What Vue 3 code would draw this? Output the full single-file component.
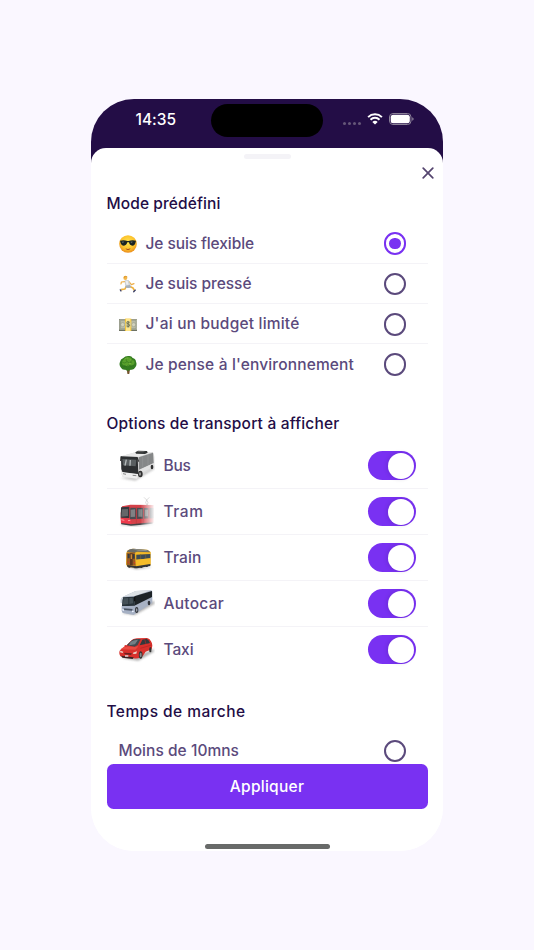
<script setup>
import { ref, reactive } from 'vue';

const mode = ref('flexible');
const walk = ref('');

const modes = [
    { id: 'flexible', label: 'Je suis flexible', width: 107.5 },
    { id: 'presse', label: 'Je suis pressé', width: 105 },
    { id: 'budget', label: "J'ai un budget limité", width: 153 },
    { id: 'nature', label: "Je pense à l'environnement", width: 207.5 }
];

const transports = reactive([
    { id: 'bus', label: 'Bus', width: 26, on: true },
    { id: 'tram', label: 'Tram', width: 39, on: true },
    { id: 'train', label: 'Train', width: 37, on: true },
    { id: 'autocar', label: 'Autocar', width: 59.5, on: true },
    { id: 'taxi', label: 'Taxi', width: 29, on: true }
]);

// spread the letters so that each label takes the width given
const vFit = {
    mounted(el, binding) {
        const range = document.createRange();
        range.selectNodeContents(el);
        const natural = range.getBoundingClientRect().width;
        el.style.letterSpacing = (binding.value + 1 - natural) / el.textContent.length + 'px';
    }
};
</script>

<template>
    <div class="page">
        <div class="phone">
            <header class="status">
                <span v-fit="39.5" class="time">14:35</span>
                <span class="island"></span>
                <div class="signals">
                    <span class="dots"><i></i><i></i><i></i><i></i></span>
                    <svg class="wifi" width="16" height="12" viewBox="0 0 16 12">
                        <path d="M1.1 4.1a10 10 0 0 1 13.8 0M3.5 6.7a6.4 6.4 0 0 1 9 0" fill="none" stroke="#fff" stroke-width="2" />
                        <path d="M5.3 8.9a4 4 0 0 1 5.4 0L8 11.6z" fill="#fff" />
                    </svg>
                    <svg class="battery" width="25" height="12" viewBox="0 0 25 12">
                        <rect x=".5" y=".5" width="21.5" height="11" rx="3.5" fill="none" stroke="#8b8198" />
                        <rect x="1.7" y="1.7" width="19.1" height="8.6" rx="2.5" fill="#fff" />
                        <path d="M23.2 4.2q1.5.5 1.5 1.8t-1.5 1.8z" fill="#8b8198" />
                    </svg>
                </div>
            </header>

            <main class="sheet">
                <div class="grabber"></div>
                <div class="top">
                    <button class="close" aria-label="Fermer">
                        <svg width="12" height="12" viewBox="0 0 12 12">
                            <path d="M1.2 1.2l9.6 9.6M10.8 1.2l-9.6 9.6" stroke="#55456f" stroke-width="1.7" stroke-linecap="round" />
                        </svg>
                    </button>
                </div>

                <div class="content">
                    <section class="modes">
                        <h2><span v-fit="113">Mode prédéfini</span></h2>
                        <ul>
                            <li v-for="item in modes" :key="item.id" @click="mode = item.id">
                                <svg v-if="item.id === 'flexible'" class="emoji" viewBox="57 29 54 54">
                                    <defs>
                                        <radialGradient id="face" cx=".5" cy=".4" r=".6">
                                            <stop offset="0" stop-color="#ffe652" />
                                            <stop offset=".65" stop-color="#fcc22c" />
                                            <stop offset="1" stop-color="#e98b1e" />
                                        </radialGradient>
                                    </defs>
                                    <circle cx="84" cy="56" r="26.5" fill="url(#face)" />
                                    <path d="M60 46q12-3 22 1h4q10-4 22-1l-1 4q-2 11-10 11-8 0-10-10h-5q-3 10-10 10-9 0-11-11z" fill="#1b2423" />
                                    <path d="M65 49q5-1 8 0l-5 5zM91 49q5-1 8 0l-5 5z" fill="#5d6866" />
                                    <path d="M76 69q9 4 16-1-2 6-8 6-5 0-8-5z" fill="#9b431b" />
                                </svg>
                                <svg v-else-if="item.id === 'presse'" class="emoji" viewBox="57 151 54 54">
                                    <path d="M75 171l-11 1-1 6M87 171l7 9 8-3" fill="none" stroke="#efad43" stroke-width="3.5" stroke-linecap="round" stroke-linejoin="round" />
                                    <path d="M79 184l-4 9-12 2M87 184l12 6 4 7" fill="none" stroke="#f0b13a" stroke-width="5" stroke-linejoin="round" />
                                    <path d="M74 167l12-1 6 15-3 8-11-1-3-7z" fill="#ccd1d3" />
                                    <path d="M77 169h6l3 11h-7z" fill="#ededee" />
                                    <path d="M77 183l13-2 4 7-7 2-11-1z" fill="#a7afb8" />
                                    <circle cx="76" cy="160" r="6" fill="#f3b74b" />
                                    <path d="M71 159q0-6 5-6 6 0 7 5l-7-1-2 4z" fill="#e09e35" />
                                    <path d="M60 192l5 6-2 4-4-6zM99 200l7-6 2 3-7 7z" fill="#34385f" />
                                </svg>
                                <svg v-else-if="item.id === 'budget'" class="emoji" viewBox="57 272 54 54">
                                    <path d="M57 281h55v36H57z" fill="#6d7263" />
                                    <path d="M58 282h53v31H58z" fill="#b9bca9" />
                                    <path d="M61 285h47v25H61z" fill="none" stroke="#858a7b" stroke-width="1.5" />
                                    <circle cx="68" cy="298" r="6" fill="#d2d2bd" stroke="#78806e" />
                                    <circle cx="101" cy="298" r="6" fill="#d2d2bd" stroke="#78806e" />
                                    <path d="M75 280h19v37H75z" fill="#f2c33a" />
                                    <path d="M78 280h13v37H78z" fill="#ffe68b" />
                                    <ellipse cx="84.5" cy="297" rx="8" ry="11" fill="#d5cd91" />
                                    <path d="M89 291q-8-4-9 1 0 3 5 4 5 2 4 5-2 4-9 1M84.5 288v18" fill="none" stroke="#4d553f" stroke-width="2" />
                                </svg>
                                <svg v-else class="emoji" viewBox="57 393 54 54">
                                    <path d="M80 430l2 16q3 2 6 0l2-16z" fill="#75542f" />
                                    <path d="M84 393q10-1 14 6 9 2 10 11 4 9-2 17-4 9-14 7-8 6-16 0-9 2-13-6-7-8-3-17 1-9 10-12 5-6 14-6z" fill="#347d20" />
                                    <path d="M70 405q4-9 14-8 10-1 13 7 9 3 6 12-5 8-13 5-8 6-15 0-10-1-9-8 0-6 4-8z" fill="#58a02c" />
                                    <path d="M67 412q8 5 14-2 6 7 15 1M73 424q7 4 12-4 8 7 17 1M80 400q-5 4 1 10M98 405q-5-1-6 6M64 423q6 5 11 2" fill="none" stroke="#2f6f1c" stroke-width="1.5" />
                                    <path d="M74 403q5-5 11-4M89 403l5 3M87 415l6 1" fill="none" stroke="#83bd42" stroke-width="2" />
                                </svg>
                                <span v-fit="item.width" class="label">{{ item.label }}</span>
                                <span class="radio" :class="{ checked: mode === item.id }"></span>
                            </li>
                        </ul>
                    </section>

                    <section class="transports">
                        <h2><span v-fit="232">Options de transport à afficher</span></h2>
                        <ul>
                            <li v-for="item in transports" :key="item.id">
                                <svg v-if="item.id === 'bus'" class="vehicle" viewBox="56 143 108 105">
                                    <defs>
                                        <filter id="soft" x="-20%" y="-40%" width="140%" height="180%"><feGaussianBlur stdDeviation="3" /></filter>
                                    </defs>
                                    <path d="M59 233l46 8 57-35v-9l-50 29z" fill="#999" opacity=".55" filter="url(#soft)" />
                                    <path d="M65 167l40-11 52-1q4 3 5 14v32l-43 27-9 8-43-7-4-9-1-41z" fill="#d8d8d8" />
                                    <path d="M65 167l40-11 52-1-41 14z" fill="#e9e9e9" />
                                    <path d="M105 156l8-5 27 1 2 5-8 4-27-1z" fill="#303333" />
                                    <path d="M108 155l7-3 20 1-7 3z" fill="#666" />
                                    <path d="M62 168l50 2 2 51-47-4-4-11z" fill="#2d2f31" />
                                    <path d="M66 176l42 2-2 20-38-3z" fill="#5a5f61" />
                                    <path d="M78 178l-4 18M90 179l-1 17" stroke="#b5babb" stroke-width="4" />
                                    <path d="M115 171l43-14 2 31-44 20z" fill="#858788" />
                                    <path d="M127 168v33M143 163v32" stroke="#9a9c9d" stroke-width="1.5" />
                                    <path d="M117 209l43-20v10l-42 21z" fill="#e2e2e2" />
                                    <path d="M62 214l51 8-2 13-42-6-7-7z" fill="#eee" />
                                    <path d="M68 220l9 2M97 225l11 1" stroke="#888" stroke-width="3" />
                                    <ellipse cx="120" cy="221" rx="7" ry="10" fill="#303030" />
                                    <ellipse cx="119" cy="221" rx="3" ry="5" fill="#999" />
                                    <ellipse cx="155" cy="200" rx="4" ry="7" fill="#303030" />
                                    <path d="M62 168l-1 14M111 172l4 12" stroke="#222" stroke-width="3" />
                                </svg>
                                <svg v-else-if="item.id === 'tram'" class="vehicle" viewBox="56 282 108 105">
                                    <defs>
                                        <linearGradient id="fade" x1="0" x2="1">
                                            <stop offset="0" stop-color="#fff" stop-opacity="0" />
                                            <stop offset="1" stop-color="#fff" />
                                        </linearGradient>
                                    </defs>
                                    <path d="M62 373l43 4 57-7" stroke="#999" stroke-width="5" opacity=".5" filter="url(#soft)" />
                                    <path d="M65 319l25-5 70 1v53l-66 7-32-4-1-32z" fill="#d44149" />
                                    <path d="M62 322l25-2v34l-26-1z" fill="#35383d" />
                                    <path d="M65 328l18-1v21l-20 2z" fill="#656669" />
                                    <path d="M90 323l70 1v31l-71 3z" fill="#494d52" />
                                    <path d="M91 329l13-1v22l-13 1zM114 328h12v22h-12zM134 329h9v20h-9z" fill="#7f8284" />
                                    <path d="M108 321v51M130 320v52M146 320v50" stroke="#c33b42" stroke-width="3" />
                                    <path d="M61 353l28 4 5 11-5 5-27-3z" fill="#ed394b" />
                                    <path d="M63 359l9 2M83 362l7-1" stroke="#ffd4d2" stroke-width="2" />
                                    <path d="M63 371l29 4 65-6" fill="none" stroke="#424347" stroke-width="4" />
                                    <path d="M120 305h44v78h-44z" fill="url(#fade)" />
                                    <path d="M131 292l8 8 8-8M139 300l-3 8 4 8M139 300l4 7-2 9" fill="none" stroke="#bbb" stroke-width="1.5" />
                                </svg>
                                <svg v-else-if="item.id === 'train'" class="vehicle" viewBox="56 15 108 105">
                                    <path d="M80 94l28 8 43-6" stroke="#999" stroke-width="3" opacity=".5" filter="url(#soft)" />
                                    <path d="M82 46l15-5 44 3 10 7v40l-43 8-27-4-4-7 1-34z" fill="#e7ad25" />
                                    <path d="M79 50q7-10 22-9l41 4 8 7-40-2-7 4z" fill="#6a6c67" />
                                    <path d="M96 42l41 3 8 4-31-2z" fill="#92938c" />
                                    <path d="M79 53l24-1 3 40-27-2z" fill="#9a5c22" />
                                    <path d="M82 57h6v13h-6zM97 57h6v14h-6z" fill="#343b40" />
                                    <path d="M89 55h8v36h-8z" fill="#5c3820" />
                                    <path d="M91 58h4v14h-4z" fill="#c98835" />
                                    <path d="M106 52l44 1v5l-44 1z" fill="#f2b928" />
                                    <path d="M108 59l42-2v13l-42 4z" fill="#3f4b54" />
                                    <path d="M121 57v16M136 57v14" stroke="#77683a" stroke-width="2" />
                                    <path d="M107 74l43-4v17l-42 7z" fill="#f5bc28" />
                                    <path d="M80 90l27 4 43-7v6l-40 7-29-5z" fill="#303538" />
                                    <path d="M87 92v6M105 94v6M123 94v5M139 90v6" stroke="#333" stroke-width="6" />
                                    <path d="M82 82h3M101 83h3" stroke="#db3522" stroke-width="4" />
                                </svg>
                                <svg v-else-if="item.id === 'autocar'" class="vehicle" viewBox="56 153 108 105">
                                    <path d="M65 235l39 5 59-34-2-9-49 25z" fill="#888" opacity=".65" filter="url(#soft)" />
                                    <path d="M68 185l38-17 47-2 3 4v34l-47 29-9 7-33-6-3-7 3-39z" fill="#a8b2c4" />
                                    <path d="M68 185l38-17 46-2-48 17z" fill="#dce1e5" />
                                    <path d="M102 184l53-16v18l-53 26z" fill="#1d2327" />
                                    <path d="M67 187l35-2 1 27-38 2z" fill="#273239" />
                                    <path d="M70 190l14-1v18l-17 2zM87 189l10-1 2 17-12 2z" fill="#445057" />
                                    <path d="M64 213l39 1-1 21-37-4z" fill="#a5b0c4" />
                                    <path d="M70 220l27 2-2 5-24-2z" fill="#4a5564" />
                                    <path d="M66 224l5 2M95 230l5-1" stroke="#eef3ff" stroke-width="4" />
                                    <ellipse cx="109" cy="225" rx="5" ry="9" fill="#30343b" />
                                    <ellipse cx="109" cy="225" rx="2.5" ry="5" fill="#999fa9" />
                                    <ellipse cx="146" cy="204" rx="4" ry="7" fill="#30343b" />
                                    <path d="M67 188q-6 4-4 16" fill="none" stroke="#cdd5df" stroke-width="4" />
                                    <path d="M103 186v13" stroke="#111" stroke-width="4" />
                                </svg>
                                <svg v-else class="vehicle" viewBox="56 291 108 105">
                                    <path d="M60 368l54 9 46-27v-8l-40 18z" fill="#777" opacity=".6" filter="url(#soft)" />
                                    <path d="M57 351q1-8 12-13l10-7 13-14q5-6 18-7l30-1q8 1 12 10 4 5 4 13l-2 11-18 7-9 14-14 6q-28 1-53-6-4-5-3-13z" fill="#d8302c" />
                                    <path d="M79 331l14-14q5-5 16-5h12l-9 18-9 5z" fill="#414a50" />
                                    <path d="M91 320q8-5 22-6l-9 14-18 3z" fill="#747f85" />
                                    <path d="M118 331l8-17 12-3q8 3 10 11l-1 3z" fill="#32383c" />
                                    <path d="M133 312l4 15" stroke="#b22724" stroke-width="2" />
                                    <path d="M73 334l31 2 12-4-11 12-44-1z" fill="#ea4a42" />
                                    <path d="M120 340l34-10" fill="none" stroke="#b32321" stroke-width="2" />
                                    <path d="M60 347l9 3-2 4-8-2zM98 353l12-4-2 7-9 1z" fill="#ead5ca" />
                                    <path d="M71 353l24 2-3 5-19-2z" fill="#6b2221" />
                                    <path d="M62 362l38 5-3 5-31-4z" fill="#3c2222" />
                                    <path d="M74 361h10v4H74z" fill="#eee" />
                                    <ellipse cx="121" cy="360" rx="5.5" ry="11" fill="#333" />
                                    <ellipse cx="121" cy="360" rx="3" ry="7" fill="#888" />
                                    <ellipse cx="150" cy="344" rx="3.5" ry="8" fill="#333" />
                                    <path d="M73 330l6 1v5l-6-1zM113 334l7-2v5l-6 1z" fill="#d8302c" />
                                </svg>
                                <span v-fit="item.width" class="label">{{ item.label }}</span>
                                <button class="toggle" :class="{ on: item.on }" :aria-label="item.label" @click="item.on = !item.on">
                                    <span class="knob"></span>
                                </button>
                            </li>
                        </ul>
                    </section>

                    <section class="walking">
                        <h2><span v-fit="138">Temps de marche</span></h2>
                        <ul>
                            <li @click="walk = '10'">
                                <span v-fit="119.5" class="label">Moins de 10mns</span>
                                <span class="radio" :class="{ checked: walk === '10' }"></span>
                            </li>
                        </ul>
                    </section>
                </div>

                <button class="apply"><span v-fit="73.5">Appliquer</span></button>
                <div class="home"></div>
            </main>
        </div>
    </div>
</template>

<style>
body {
    background: #faf7ff;
}
</style>

<style scoped>
* {
    box-sizing: border-box;
}

.page {
    height: 950px;
    padding-top: 99px;
    overflow: hidden;
    background: #faf7ff;
    font-family: Inter, "Noto Sans", sans-serif;
}

.phone {
    width: 352px;
    height: 751.5px;
    margin: 0 auto;
    display: flex;
    flex-direction: column;
    overflow: hidden;
    border-radius: 43px;
    background: linear-gradient(#230d46 80px, #fff 80px);
}

.status {
    height: 49px;
    flex: none;
    display: grid;
    grid-template-columns: 120px 112px 1fr;
    padding-top: 4.5px;
}

.time {
    padding: 5.5px 0 0 44.5px;
    color: #fff;
    font-size: 15.5px;
    font-weight: 500;
    line-height: 22px;
    white-space: nowrap;
}

.island {
    height: 33px;
    border-radius: 17px;
    background: #000;
}

.signals {
    display: flex;
    align-items: center;
    height: 31px;
    padding-left: 20px;
}

.dots {
    display: flex;
    gap: 2px;
    margin: 8px 6px 0 0;
}

.dots i {
    width: 3px;
    height: 3px;
    border-radius: 50%;
    background: #655678;
}

.battery {
    margin-left: 5.5px;
}

.sheet {
    flex: 1;
    min-height: 0;
    display: flex;
    flex-direction: column;
    padding: 6px 15.5px 0;
    border-radius: 15px 15px 0 0;
    background: #fff;
}

.grabber {
    width: 47px;
    height: 5px;
    flex: none;
    align-self: center;
    border-radius: 3px;
    background: #f4f3f7;
}

.top {
    display: flex;
    justify-content: flex-end;
    height: 32px;
    flex: none;
    padding-top: 8px;
    margin-right: -6px;
}

button {
    border: none;
    padding: 0;
    font-family: inherit;
    cursor: pointer;
}

.close {
    width: 12px;
    height: 12px;
    background: none;
}

.close svg {
    display: block;
}

.content {
    flex: 1;
    min-height: 0;
    overflow: hidden;
}

h2 {
    height: 32px;
    margin: 0;
    color: #230d46;
    font-size: 15.5px;
    font-weight: 500;
    line-height: 26px;
    white-space: nowrap;
}

ul {
    margin: 0;
    padding: 0;
    list-style: none;
}

.modes {
    margin-bottom: 26.5px;
}

.modes h2 {
    height: 32.5px;
}

.transports {
    margin-bottom: 26px;
}

li {
    display: flex;
    align-items: center;
    height: 40.33px;
    padding: 0 21.5px 0 12px;
    border-bottom: 1px solid #f4f3f7;
}

li:last-child {
    border-color: transparent;
}

.modes li {
    padding-top: 1px;
}

.transports li {
    height: 46px;
    padding-right: 12px;
}

.emoji {
    width: 18px;
    height: 18px;
    margin: 1px 9px 0 0;
}

.vehicle {
    width: 36px;
    height: 35px;
    margin-right: 9px;
}

.label {
    color: #5b4a7c;
    font-size: 15.5px;
    font-weight: 500;
    line-height: 22px;
    white-space: nowrap;
}

.radio {
    display: flex;
    align-items: center;
    justify-content: center;
    width: 22.5px;
    height: 22.5px;
    margin-left: auto;
    border: 2px solid #5b4a7c;
    border-radius: 50%;
}

.radio.checked {
    border-color: #7931f2;
}

.radio.checked::after {
    content: "";
    width: 11.5px;
    height: 11.5px;
    flex: none;
    border-radius: 50%;
    background: #7931f2;
}

.toggle {
    display: flex;
    align-items: center;
    width: 48px;
    height: 29px;
    margin-left: auto;
    padding: 0 1.5px;
    border-radius: 15px;
    background: #dcd8e4;
}

.toggle.on {
    justify-content: flex-end;
    background: #7931f2;
}

.knob {
    width: 26px;
    height: 26px;
    border-radius: 50%;
    background: #fff;
    box-shadow: -1px 0 4px rgba(35, 13, 70, .15);
}

.apply {
    height: 45px;
    flex: none;
    border-radius: 6.5px;
    background: #7931f2;
    color: #fff;
    font-size: 15.5px;
    font-weight: 500;
}

.home {
    width: 125px;
    height: 4.5px;
    flex: none;
    align-self: center;
    margin: 35px 0 2px;
    border-radius: 3px;
    background: #686a69;
}
</style>
